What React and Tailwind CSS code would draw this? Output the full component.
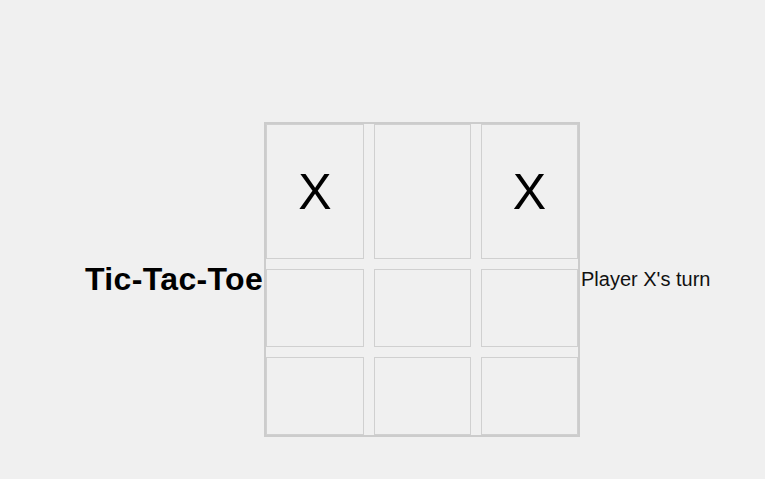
export default function App() {
  const board = ["X", "", "X", "", "", "", "", "", ""];

  return (
    <div className="min-h-screen bg-[#f0f0f0] pt-[122px] pl-[85px] font-['Liberation_Sans',Arial,sans-serif] text-black">
      <div className="flex items-center">
        <h1 className="w-[179px] shrink-0 text-[32px] font-bold leading-[37px] tracking-[0.35px]">Tic-Tac-Toe</h1>

        <div className="grid grid-cols-[98px_97px_97px] grid-rows-[135px_78px_78px] gap-[10px] border-2 border-[#cccccc]">
          {board.map((v, i) => (
            <div
              key={i}
              className="flex items-center justify-center border border-[#d0d0d0] text-[50px] leading-none"
            >
              {v}
            </div>
          ))}
        </div>

        <p className="pl-px text-[20px] leading-[23px] text-[#111]">Player X's turn</p>
      </div>
    </div>
  );
}
